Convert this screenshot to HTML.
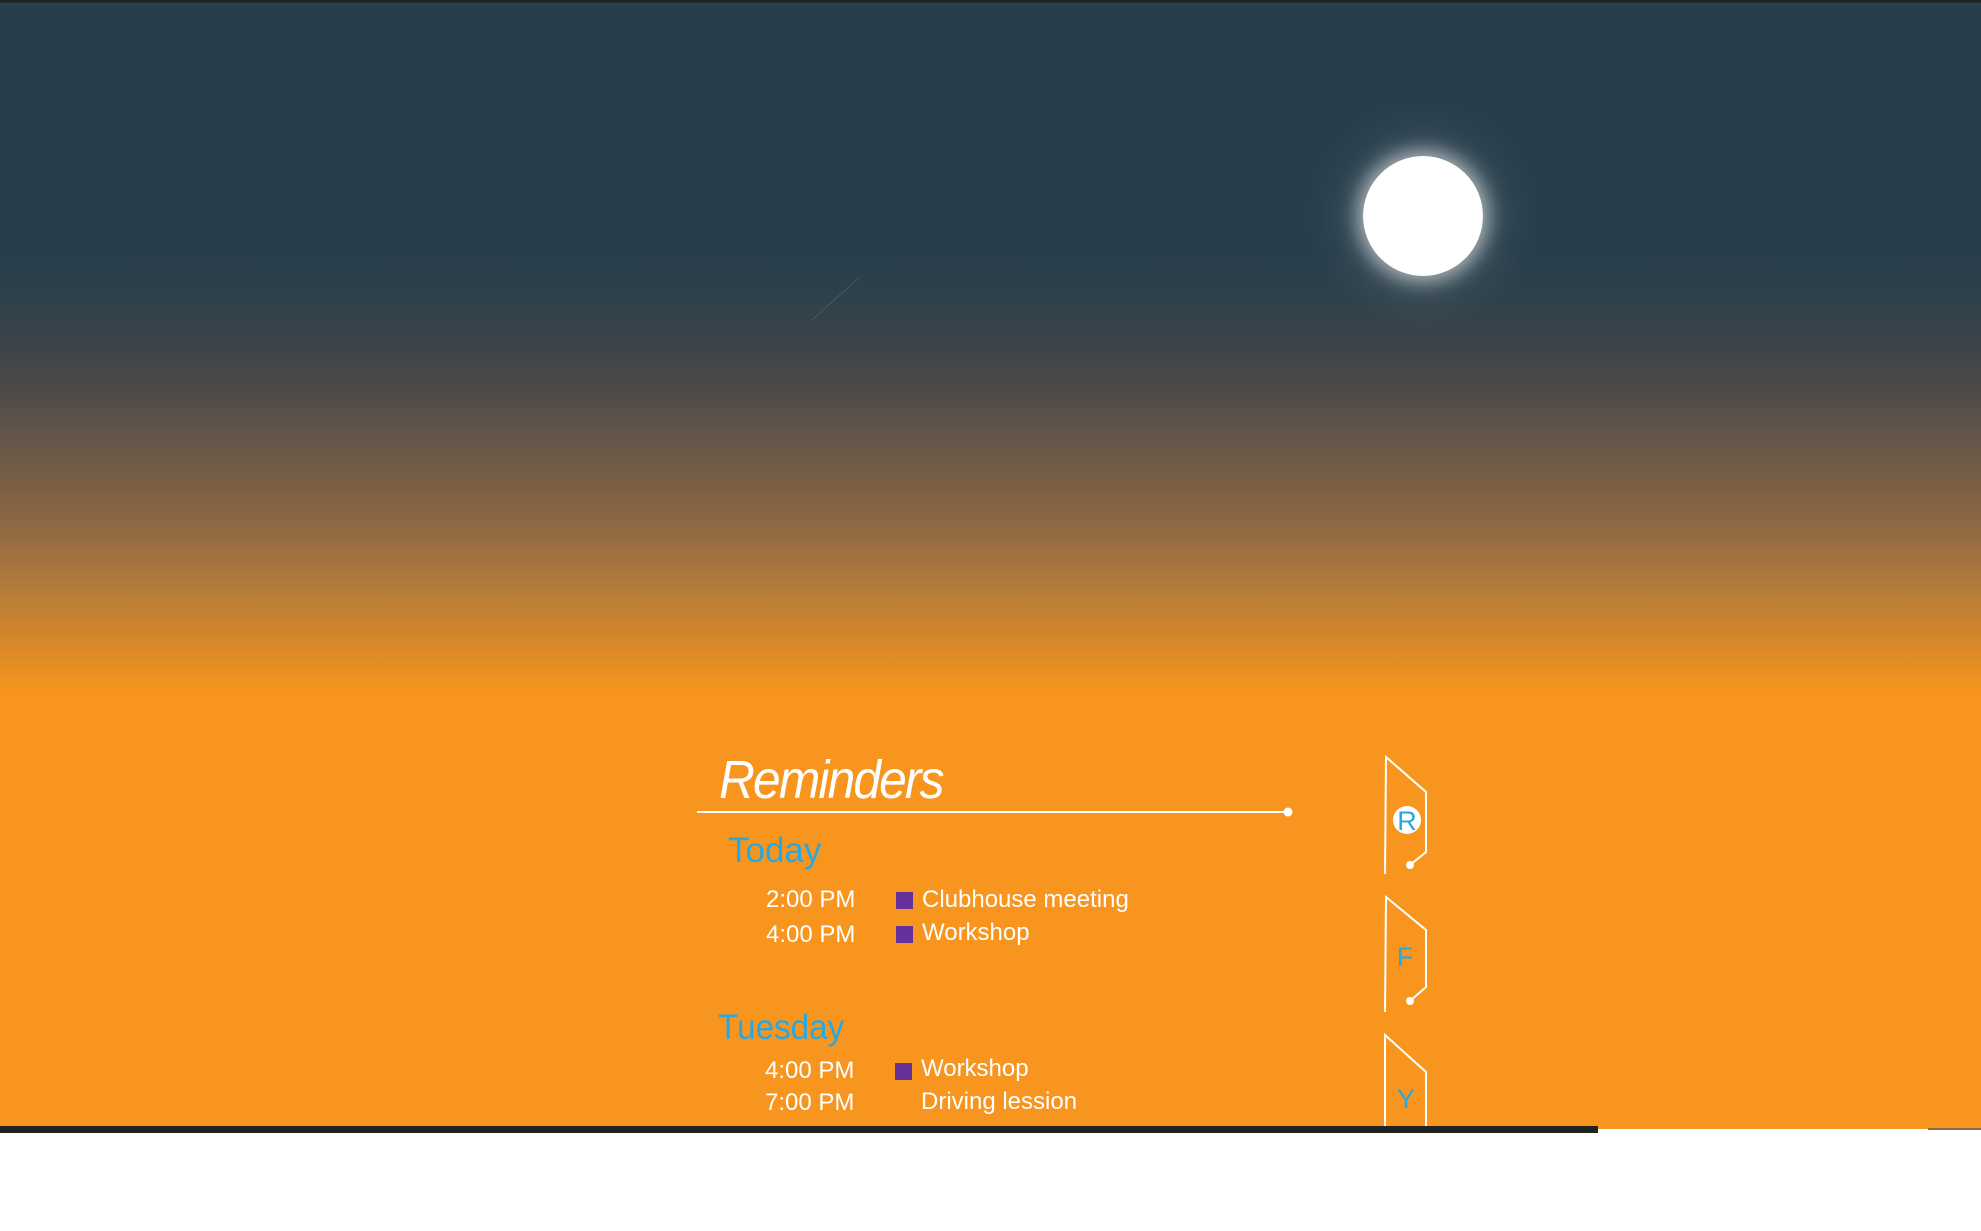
<!DOCTYPE html>
<html><head><meta charset="utf-8"><style>
html,body{margin:0;padding:0;width:1981px;height:1231px;overflow:hidden;background:#fff;font-family:"Liberation Sans",sans-serif}
#sky{position:absolute;left:0;top:0;width:1981px;height:1129px;background:linear-gradient(to bottom,#222 0,#222 2px,#273e4b 3px,#273e4b 250px,#2e414b 300px,#3d4549 350px,#4a4947 383px,#6a5848 450px,#8a6643 517px,#b07a3b 583px,#dc8a28 650px,#f7951f 693px,#f7951f 100%)}
.moon{position:absolute;left:1363px;top:156px;width:120px;height:120px;border-radius:50%;background:radial-gradient(circle at 48% 55%,#fff 0,#fff 70%,#f4f6f8 100%);box-shadow:0 0 18px 6px rgba(255,255,255,.55),0 0 50px 16px rgba(255,255,255,.15)}
.t{position:absolute;color:#fff;white-space:nowrap}
.sq{position:absolute;width:17px;height:17px;background:#66319a}
.blue{color:#29a8e0}
</style></head><body>
<div id="sky"></div>
<div class="moon"></div>
<svg width="1981" height="1231" style="position:absolute;left:0;top:0">
<line x1="812" y1="320" x2="859" y2="278" stroke="rgba(255,255,255,.12)" stroke-width="1"/>
<line x1="697" y1="812" x2="1288" y2="812" stroke="#fff" stroke-width="2"/>
<circle cx="1288" cy="812" r="4.5" fill="#fff"/>
<g fill="none" stroke="#fff" stroke-width="2">
<path d="M1385 874 L1386 757 L1426 792 L1426 852 L1410 865"/>
<path d="M1385 1012 L1386 897 L1426 930 L1426 987 L1410 1001"/>
<path d="M1385 1133 L1385 1035 L1426 1072 L1426 1133"/>
</g>
<circle cx="1410" cy="865" r="4" fill="#fff"/>
<circle cx="1410" cy="1001" r="4" fill="#fff"/>
<circle cx="1407" cy="820" r="14" fill="#fff"/>
<text x="1407" y="830" text-anchor="middle" font-family="Liberation Sans" font-size="27" fill="#29a8e0">R</text>
<text x="1405" y="966" text-anchor="middle" font-family="Liberation Sans" font-size="27" fill="#29a8e0">F</text>
<text x="1406" y="1108" text-anchor="middle" font-family="Liberation Sans" font-size="27" fill="#29a8e0">Y</text>
</svg>
<div class="t" style="left:719px;top:749px;font-size:54px;font-style:italic;letter-spacing:-2px;transform:scaleX(0.92);transform-origin:left top">Reminders</div>
<div class="t blue" style="left:728px;top:831px;font-size:35px">Today</div>
<div class="t" style="left:766px;top:886px;font-size:24px">2:00 PM</div>
<div class="sq" style="left:896px;top:892px"></div>
<div class="t" style="left:922px;top:886px;font-size:24px">Clubhouse meeting</div>
<div class="t" style="left:766px;top:921px;font-size:24px">4:00 PM</div>
<div class="sq" style="left:896px;top:926px"></div>
<div class="t" style="left:922px;top:919px;font-size:24px">Workshop</div>
<div class="t blue" style="left:718px;top:1008px;font-size:35px;transform:scaleX(0.95);transform-origin:left top">Tuesday</div>
<div class="t" style="left:765px;top:1057px;font-size:24px">4:00 PM</div>
<div class="sq" style="left:895px;top:1063px"></div>
<div class="t" style="left:921px;top:1055px;font-size:24px">Workshop</div>
<div class="t" style="left:765px;top:1089px;font-size:24px">7:00 PM</div>
<div class="t" style="left:921px;top:1088px;font-size:24px">Driving lession</div>
<div style="position:absolute;left:0;top:1126px;width:1598px;height:7px;background:#202322"></div>
<div style="position:absolute;left:1928px;top:1128px;width:53px;height:2px;background:#8a6a40"></div>
</body></html>
